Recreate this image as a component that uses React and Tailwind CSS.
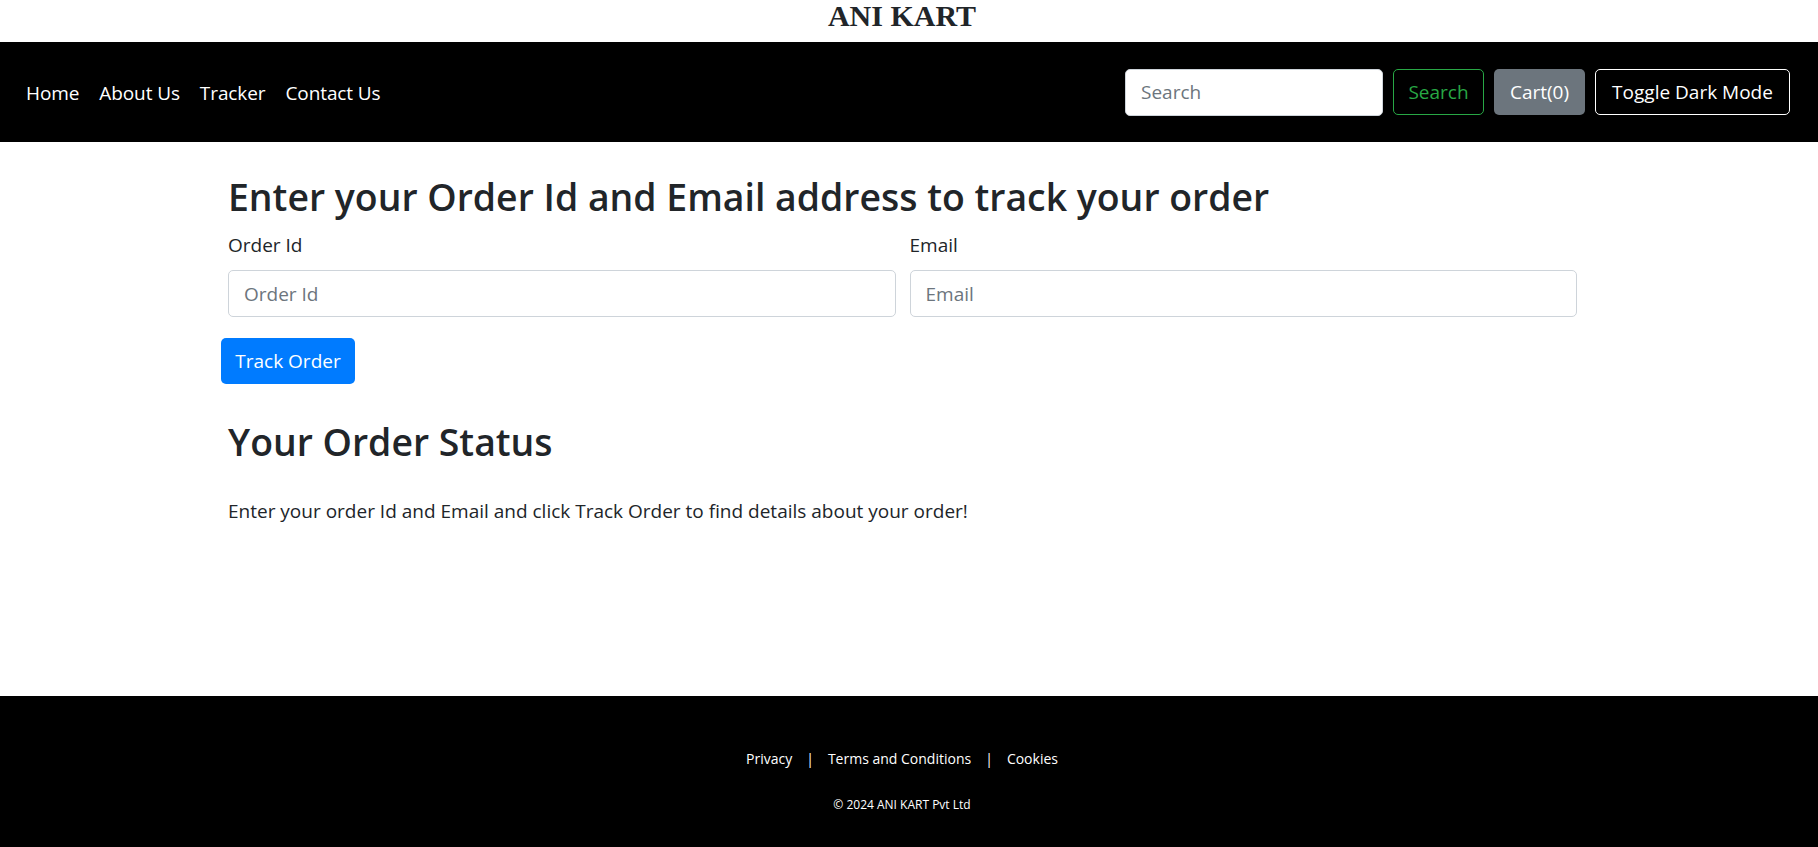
import { useState } from "react";

export default function App() {
  const [orderId, setOrderId] = useState("");
  const [email, setEmail] = useState("");

  const navLinks = ["Home", "About Us", "Tracker", "Contact Us"];

  return (
    <div className="min-h-screen flex flex-col bg-white text-[#212529] font-['Open_Sans',sans-serif] text-[19px]">
      {/* Brand */}
      <div className="h-[42px] text-center pt-[1px] pr-[14px]">
        <span className="font-['Liberation_Serif',serif] font-bold text-[30px] leading-[30px]">
          ANI KART
        </span>
      </div>

      {/* Navbar */}
      <nav className="h-[100px] bg-black flex items-center justify-between pl-[16px] pr-[28px]">
        <ul className="flex items-center mt-[2px]">
          {navLinks.map((link) => (
            <li key={link}>
              <a href="#" className="block px-[10px] text-white leading-[30px] tracking-[-0.1px]">
                {link}
              </a>
            </li>
          ))}
        </ul>

        <form className="flex items-center gap-[10px]" onSubmit={(e) => e.preventDefault()}>
          <input
            type="search"
            placeholder="Search"
            className="w-[258px] h-[47px] bg-white rounded-[5px] border border-[#ced4da] px-[15px] text-[#495057] placeholder:text-[#6c757d] outline-none"
          />
          <button
            type="submit"
            className="w-[91px] h-[46px] rounded-[5px] border border-[#28a745] text-[#28a745]"
          >
            Search
          </button>
          <button
            type="button"
            className="w-[91px] h-[46px] rounded-[5px] bg-[#6c757d] text-white"
          >
            Cart(0)
          </button>
          <button
            type="button"
            className="w-[195px] h-[46px] rounded-[5px] border border-white text-white"
          >
            Toggle Dark Mode
          </button>
        </form>
      </nav>

      {/* Tracker */}
      <main className="flex-1 pb-[40px]">
        <div className="ml-[221px] w-[1363px] pt-[31px]">
          <div className="px-[7px]">
            <h2 className="text-[37.4px] font-semibold leading-[48px] mb-[9px]">
              Enter your Order Id and Email address to track your order
            </h2>

            <div className="grid grid-cols-2 gap-[14px]">
              <div>
                <label htmlFor="orderId" className="block leading-[30px] mb-[10px]">
                  Order Id
                </label>
                <input
                  id="orderId"
                  type="text"
                  value={orderId}
                  onChange={(e) => setOrderId(e.target.value)}
                  placeholder="Order Id"
                  className="w-full h-[47px] rounded-[5px] border border-[#ced4da] px-[15px] text-[#495057] placeholder:text-[#6c757d] outline-none"
                />
              </div>
              <div>
                <label htmlFor="email" className="block leading-[30px] mb-[10px]">
                  Email
                </label>
                <input
                  id="email"
                  type="email"
                  value={email}
                  onChange={(e) => setEmail(e.target.value)}
                  placeholder="Email"
                  className="w-full h-[47px] rounded-[5px] border border-[#ced4da] px-[15px] text-[#495057] placeholder:text-[#6c757d] outline-none"
                />
              </div>
            </div>
          </div>

          <button
            type="button"
            className="mt-[21px] w-[134px] h-[46px] rounded-[5px] bg-[#007bff] text-white"
          >
            Track Order
          </button>

          <div className="px-[7px]">
            <h2 className="mt-[34px] text-[37.4px] font-semibold leading-[48px]">Your Order Status</h2>
            <p className="mt-[30px] leading-[30px]">
              Enter your order Id and Email and click Track Order to find details about your order!
            </p>
          </div>
        </div>
      </main>

      {/* Footer */}
      <footer className="h-[151px] bg-black text-white text-center pt-[52px] pr-[14px]">
        <div className="text-[14px] leading-[21px]">
          <a href="#">Privacy</a>
          <span className="mx-[14px]">|</span>
          <a href="#">Terms and Conditions</a>
          <span className="mx-[14px]">|</span>
          <a href="#">Cookies</a>
        </div>
        <p className="mt-[26px] text-[12px] leading-[20px]">© 2024 ANI KART Pvt Ltd</p>
      </footer>
    </div>
  );
}
